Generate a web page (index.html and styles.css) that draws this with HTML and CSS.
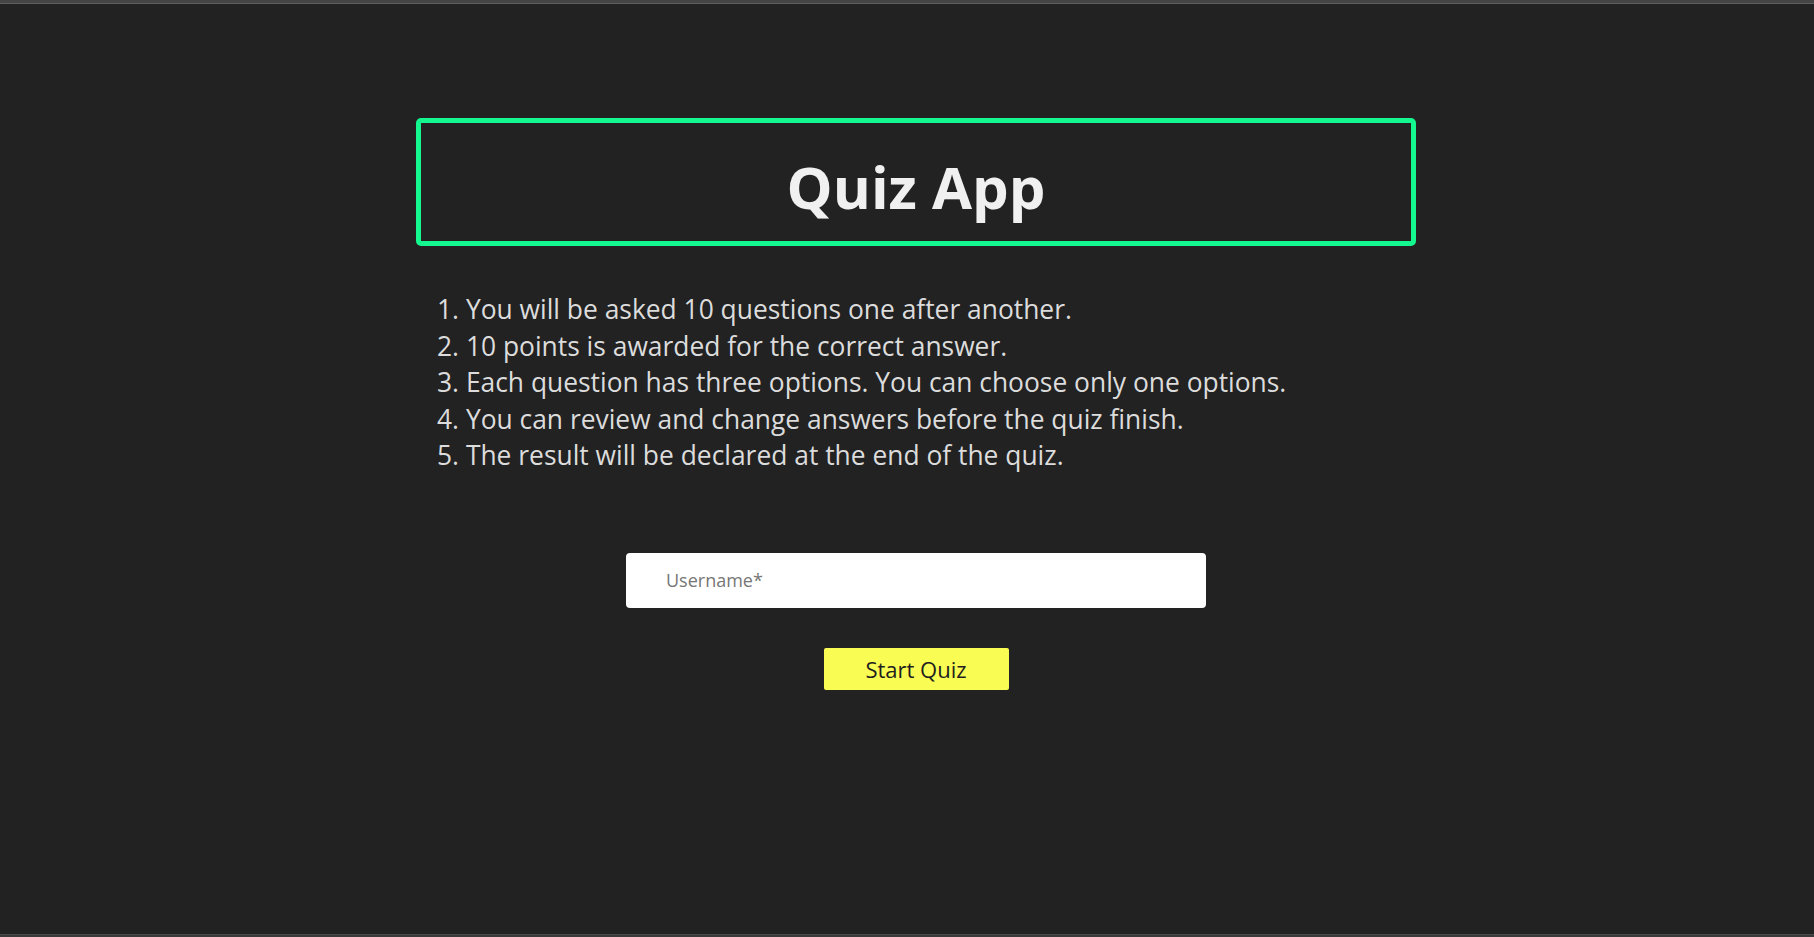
FILE: index.html
```html
<!DOCTYPE html>
<html lang="en">
<head>
<meta charset="utf-8">
<title>Quiz App</title>
<link rel="stylesheet" href="styles.css">
</head>
<body>
<div class="frame-top"></div>
<main class="page">
  <div class="container">
    <header class="title-box">
      <h1 class="title">Quiz App</h1>
    </header>
    <ol class="rules">
      <li>1. You will be asked 10 questions one after another.</li>
      <li>2. 10 points is awarded for the correct answer.</li>
      <li>3. Each question has three options. You can choose only one options.</li>
      <li>4. You can review and change answers before the quiz finish.</li>
      <li>5. The result will be declared at the end of the quiz.</li>
    </ol>
    <form class="start-form">
      <input class="username" type="text" placeholder="Username*">
      <button class="start-btn" type="button">Start Quiz</button>
    </form>
  </div>
</main>
<div class="frame-bottom"></div>
</body>
</html>
```

FILE: styles.css
```css
* { box-sizing: border-box; }

html, body {
  margin: 0;
  padding: 0;
  height: 100%;
}

body {
  background: #222222;
  font-family: "Open Sans", "Noto Sans", sans-serif;
  display: flex;
  flex-direction: column;
  overflow: hidden;
}

.frame-top {
  height: 4px;
  background: #454545;
  border-bottom: 1px solid #5e5e5e;
  flex: none;
}

.page {
  flex: 1;
  padding-left: 18px;
}

.container {
  width: 1000px;
  margin: 114px auto 0;
}

.title-box {
  height: 128px;
  border: 5px solid #13f990;
  border-radius: 5px;
  display: flex;
  align-items: center;
  justify-content: center;
}

.title {
  margin: 0;
  color: #f0f0f0;
  font-size: 58px;
  font-weight: 700;
  line-height: 1;
  padding-top: 10px;
}

.rules {
  list-style: none;
  margin: 45px 0 0;
  padding: 0 0 0 21px;
  color: #dcdcdc;
  font-size: 26.4px;
  line-height: 36.6px;
}

.start-form {
  display: flex;
  flex-direction: column;
  align-items: center;
  margin-top: 79px;
}

.username {
  width: 580px;
  height: 55px;
  border: none;
  border-radius: 4px;
  background: #ffffff;
  padding: 0 0 0 40px;
  font-family: "Open Sans", "Noto Sans", sans-serif;
  font-size: 18px;
  color: #333;
  outline: none;
}

.username::placeholder {
  color: #767676;
}

.start-btn {
  margin-top: 40px;
  width: 185px;
  height: 42px;
  border: none;
  border-radius: 2px;
  background: #f9fc52;
  color: #1e1e1e;
  font-family: "Open Sans", "Noto Sans", sans-serif;
  font-size: 22px;
  padding: 0;
}

.frame-bottom {
  height: 3px;
  flex: none;
  border-top: 1px solid #4a4a4a;
  background: #3a3a3a;
}
```
